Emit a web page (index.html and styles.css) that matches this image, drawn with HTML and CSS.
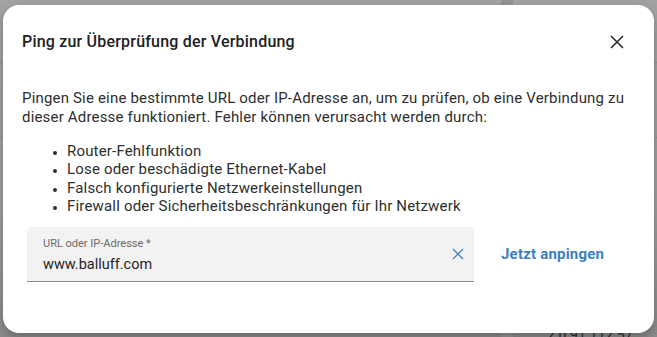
FILE: index.html
```html
<!DOCTYPE html>
<html lang="de">
<head>
  <meta charset="UTF-8" />
  <meta name="viewport" content="width=device-width, initial-scale=1.0" />
  <title>Ping zur Überprüfung der Verbindung</title>
  <link rel="stylesheet" href="styles.css">
</head>
<body>

  <!-- Page behind the overlay -->
  <div class="backdrop">
    <div class="bg-line line-1"></div>
    <div class="bg-line line-2"></div>
    <div class="bg-strip"></div>
    <div class="bg-text">2.0.91.112.57</div>
  </div>

  <!-- Dialog -->
  <div class="dialog">
    <div class="dialog-header">
      <h2>Ping zur Überprüfung der Verbindung</h2>
      <button class="close-btn" aria-label="Schließen">
        <svg width="14" height="14" viewBox="0 0 14 14">
          <path d="M1 1 L13 13 M13 1 L1 13" stroke="#2b2b2b" stroke-width="1.6" fill="none" />
        </svg>
      </button>
    </div>

    <div class="dialog-body">
      <p>Pingen Sie eine bestimmte URL oder IP-Adresse an, um zu prüfen, ob eine Verbindung zu dieser Adresse funktioniert. Fehler können verursacht werden durch:</p>
      <ul>
        <li>Router-Fehlfunktion</li>
        <li>Lose oder beschädigte Ethernet-Kabel</li>
        <li>Falsch konfigurierte Netzwerkeinstellungen</li>
        <li>Firewall oder Sicherheitsbeschränkungen für Ihr Netzwerk</li>
      </ul>

      <div class="ping-row">
        <div class="text-field">
          <div class="field-inner">
            <label>URL oder IP-Adresse *</label>
            <div class="field-value">www.balluff.com</div>
          </div>
          <span class="clear-btn">
            <svg width="12" height="12" viewBox="0 0 12 12">
              <path d="M1 1 L11 11 M11 1 L1 11" stroke="#4a86c0" stroke-width="1.4" fill="none" />
            </svg>
          </span>
        </div>
        <button class="ping-btn">Jetzt anpingen</button>
      </div>
    </div>
  </div>

</body>
</html>
```

FILE: styles.css
```css
* {
  margin: 0;
  padding: 0;
  box-sizing: border-box;
  font-family: 'Roboto', 'Liberation Sans', sans-serif;
}

body {
  background-color: #9f9f9f;
  width: 657px;
  height: 337px;
  padding: 5px 3px 4px;
  overflow: hidden;
  position: relative;
}

/* ========== Page behind ========== */
.backdrop {
  position: absolute;
  inset: 0;
  background: linear-gradient(to bottom, #a2a2a2 0, #9f9f9f 60%, #8a8a8a 100%);
}

.bg-line {
  position: absolute;
  left: 0;
  right: 0;
  height: 1px;
  background: #8e8e8e;
}

.line-1 { top: 62px; }
.line-2 { top: 137px; }

.bg-strip {
  position: absolute;
  top: 0;
  bottom: 0;
  left: 501px;
  width: 12px;
  background: #939393;
}

.bg-text {
  position: absolute;
  left: 547px;
  top: 327px;
  font-size: 14px;
  color: #2a2a2a;
}

/* ========== Dialog ========== */
.dialog {
  position: relative;
  height: 328px;
  background: #fff;
  border-radius: 16px;
  box-shadow: 0 4px 10px rgba(0, 0, 0, 0.25);
}

.dialog-header {
  display: flex;
  justify-content: space-between;
  align-items: center;
  padding: 25px 25px 0 19px;
}

.dialog-header h2 {
  font-size: 16px;
  font-weight: 500;
  line-height: 22px;
  letter-spacing: 0.2px;
  color: #212121;
}

.close-btn {
  width: 24px;
  height: 24px;
  border: none;
  background: none;
  display: flex;
  align-items: center;
  justify-content: center;
  cursor: pointer;
}

.dialog-body {
  padding: 35px 19px 0 19px;
  color: #2e2e2e;
  font-size: 15px;
  letter-spacing: 0.18px;
}

.dialog-body p {
  line-height: 19px;
}

.dialog-body ul {
  margin-top: 15px;
  padding-left: 45px;
  line-height: 18.4px;
}

.dialog-body li::marker {
  font-size: 12px;
}

/* ========== Input row ========== */
.ping-row {
  display: flex;
  align-items: center;
  margin-top: 11px;
  margin-left: 5px;
  letter-spacing: 0;
}

.text-field {
  width: 447px;
  height: 55px;
  background: #f2f2f2;
  border-radius: 4px 4px 0 0;
  border-bottom: 1px solid #8a8a8a;
  display: flex;
  align-items: center;
  justify-content: space-between;
  padding: 0 4px 0 16px;
}

.field-inner {
  display: flex;
  flex-direction: column;
  gap: 4px;
  padding-top: 4px;
}

.field-inner label {
  font-size: 11px;
  line-height: 14px;
  color: #6b6b6b;
}

.field-value {
  font-size: 14.5px;
  line-height: 20px;
  color: #1f1f1f;
}

.clear-btn {
  display: flex;
  width: 24px;
  height: 24px;
  align-items: center;
  justify-content: center;
}

.ping-btn {
  margin-left: 27px;
  border: none;
  background: none;
  font-size: 15px;
  font-weight: 700;
  letter-spacing: 0.2px;
  color: #3d7fbf;
  cursor: pointer;
}
```
